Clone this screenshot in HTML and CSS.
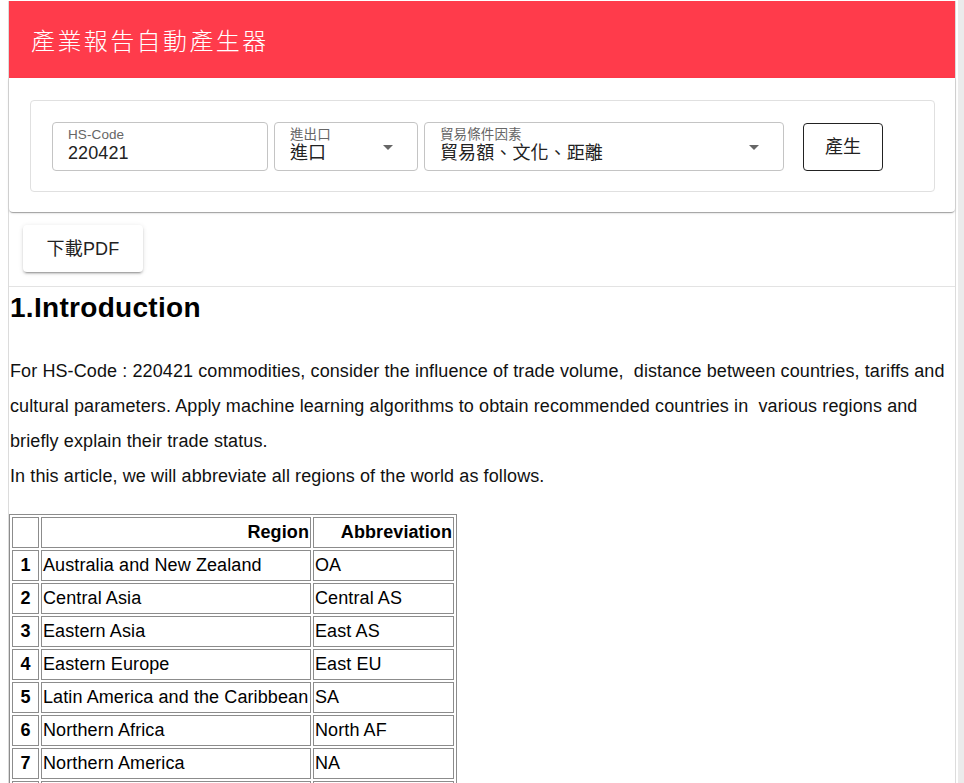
FILE: index.html
```html
<!DOCTYPE html>
<html lang="zh-Hant">
<head>
<meta charset="utf-8">
<title>產業報告自動產生器</title>
<link rel="stylesheet" href="styles.css">
</head>
<body>
<div class="page">
  <header class="appbar">
    <h1 class="title">產業報告自動產生器</h1>
  </header>
  <section class="card">
    <div class="form-box">
      <div class="field field-code">
        <span class="field-label">HS-Code</span>
        <span class="field-value">220421</span>
      </div>
      <div class="field field-select field-dir">
        <div class="field-text">
          <span class="field-label">進出口</span>
          <span class="field-value">進口</span>
        </div>
        <span class="caret"></span>
      </div>
      <div class="field field-select field-factor">
        <div class="field-text">
          <span class="field-label">貿易條件因素</span>
          <span class="field-value">貿易額、文化、距離</span>
        </div>
        <span class="caret"></span>
      </div>
      <button class="btn-outline" type="button">產生</button>
    </div>
  </section>
  <div class="toolbar">
    <button class="btn-raised" type="button">下載PDF</button>
  </div>
  <main class="report">
    <h2 class="report-title">1.Introduction</h2>
    <p class="report-text">For HS-Code : 220421 commodities, consider the influence of trade volume,&nbsp; distance between countries, tariffs and cultural parameters. Apply machine learning algorithms to obtain recommended countries in&nbsp; various regions and briefly explain their trade status.</p>
    <p class="report-text">In this article, we will abbreviate all regions of the world as follows.</p>
    <table class="dataframe">
      <thead>
        <tr class="head-row">
          <th class="col-idx"></th>
          <th class="col-region">Region</th>
          <th class="col-abbr">Abbreviation</th>
        </tr>
      </thead>
      <tbody>
        <tr><th>1</th><td>Australia and New Zealand</td><td>OA</td></tr>
        <tr><th>2</th><td>Central Asia</td><td>Central AS</td></tr>
        <tr><th>3</th><td>Eastern Asia</td><td>East AS</td></tr>
        <tr><th>4</th><td>Eastern Europe</td><td>East EU</td></tr>
        <tr><th>5</th><td>Latin America and the Caribbean</td><td>SA</td></tr>
        <tr><th>6</th><td>Northern Africa</td><td>North AF</td></tr>
        <tr><th>7</th><td>Northern America</td><td>NA</td></tr>
        <tr><th>8</th><td>Northern Europe</td><td>North EU</td></tr>
      </tbody>
    </table>
  </main>
</div>
<div class="side-strip"></div>
</body>
</html>
```

FILE: styles.css
```css
html, body {
  margin: 0;
  padding: 0;
  background: #ffffff;
}

body {
  display: flex;
  align-items: stretch;
  min-height: 783px;
  font-family: "Liberation Sans", "Noto Sans CJK TC", Arial, sans-serif;
  color: #111;
}

.page {
  margin-left: 8px;
  margin-top: 1px;
  width: 946px;
  border-left: 1px solid #dcdcdc;
  border-right: 1px solid #dcdcdc;
  flex: none;
}

.side-strip {
  flex: 1;
  margin-left: 2px;
  background: #ebebeb;
}

.appbar {
  height: 77px;
  background: #ff3b4b;
  display: flex;
  align-items: center;
  padding-left: 22px;
}

.title {
  margin: 0;
  font-family: "Noto Sans CJK TC", sans-serif;
  font-weight: 300;
  font-size: 24px;
  letter-spacing: 2.4px;
  color: #fff;
}

.card {
  background: #fff;
  padding: 22px 20px 20px 21px;
  box-shadow: 0 2px 1px -1px rgba(0,0,0,0.2), 0 1px 1px 0 rgba(0,0,0,0.14), 0 1px 3px 0 rgba(0,0,0,0.12);
  border-radius: 0 0 4px 4px;
  position: relative;
}

.form-box {
  border: 1px solid #e0e0e0;
  border-radius: 4px;
  padding: 21px 20px 20px 21px;
  display: flex;
  align-items: center;
  gap: 6px;
}

.field {
  box-sizing: border-box;
  height: 49px;
  border: 1px solid #c4c4c4;
  border-radius: 4px;
  padding: 5px 0 0 15px;
  display: flex;
}

.field-code {
  width: 216px;
  flex-direction: column;
}

.field-select {
  align-items: center;
  padding-top: 0;
  padding-right: 24px;
  justify-content: space-between;
}

.field-text {
  display: flex;
  flex-direction: column;
  padding-top: 5px;
  align-self: flex-start;
}

.field-dir { width: 144px; }
.field-factor { width: 360px; }

.field-label {
  font-size: 13.5px;
  line-height: 14px;
  letter-spacing: 0.1px;
  color: #666;
}

.field-value {
  font-size: 18px;
  line-height: 22px;
  letter-spacing: 0.1px;
  color: #222;
}

.caret {
  width: 0;
  height: 0;
  border-left: 5.5px solid transparent;
  border-right: 5.5px solid transparent;
  border-top: 5.5px solid #666;
  margin-top: 1px;
}

.btn-outline {
  margin-left: 13px;
  width: 80px;
  height: 48px;
  border: 1px solid #222;
  border-radius: 4px;
  background: #fff;
  font-family: "Liberation Sans", "Noto Sans CJK TC", sans-serif;
  font-size: 18px;
  color: #222;
  padding: 0 0 4px;
}

.toolbar {
  padding: 13px 0 14px 14px;
  border-bottom: 1px solid #e3e3e3;
}

.btn-raised {
  width: 120px;
  height: 47px;
  border: none;
  border-radius: 4px;
  background: #fff;
  box-shadow: 0 3px 1px -2px rgba(0,0,0,0.2), 0 2px 2px 0 rgba(0,0,0,0.14), 0 1px 5px 0 rgba(0,0,0,0.12);
  font-family: "Liberation Sans", "Noto Sans CJK TC", sans-serif;
  font-size: 18px;
  letter-spacing: 0.2px;
  color: #222;
  padding: 0 0 4px;
}

.report {
  padding: 0;
}

.report-title {
  margin: 5px 0 0 1px;
  font-size: 28px;
  line-height: 32px;
  font-weight: 700;
  letter-spacing: 0.3px;
  color: #000;
}

.report-text {
  margin: 0 0 0 1px;
  font-size: 18px;
  line-height: 35px;
  letter-spacing: 0.1px;
  color: #111;
}

.report-title + .report-text {
  margin-top: 30px;
}

.dataframe {
  margin-top: 20px;
  border: 1px solid #8c8c8c;
  border-spacing: 2px;
  table-layout: fixed;
  width: 448px;
  font-size: 18px;
  letter-spacing: 0.1px;
  color: #000;
}

.dataframe th,
.dataframe td {
  border: 1px solid #8c8c8c;
  padding: 1px;
  line-height: 27px;
  white-space: nowrap;
}

.head-row { text-align: right; }

.col-idx { width: 23px; }
.col-region { width: 266px; }
.col-abbr { width: 137px; }

.dataframe tbody th {
  text-align: center;
}

.dataframe td {
  text-align: left;
}
```
